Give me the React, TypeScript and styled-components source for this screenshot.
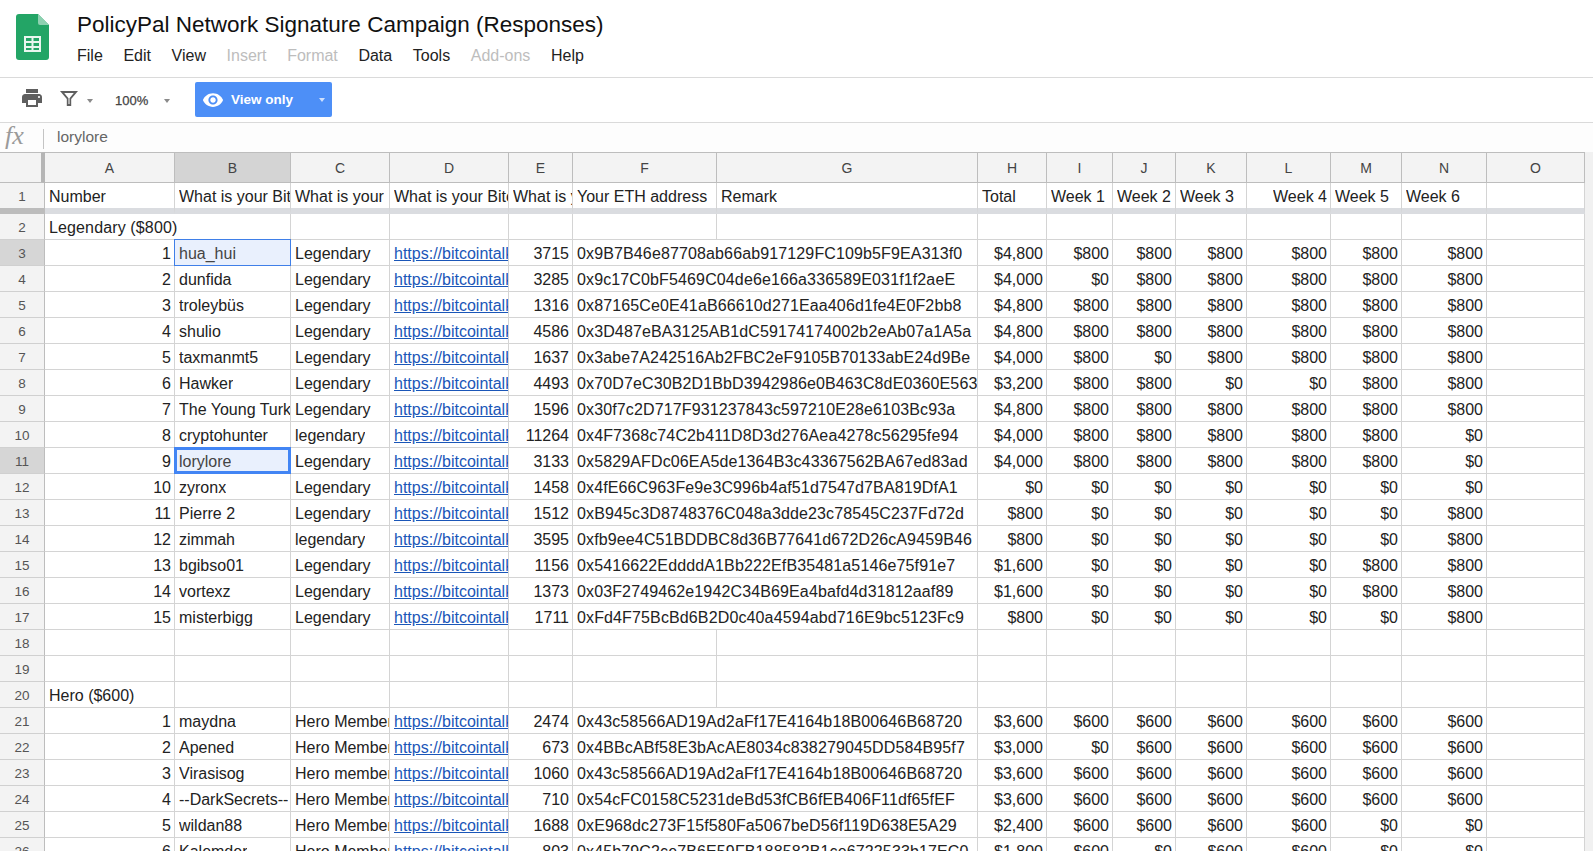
import React from "react";
import styled, { createGlobalStyle, css } from "styled-components";

const Global = createGlobalStyle`
  html, body { margin: 0; padding: 0; background: #fff; }
  body { font-family: "Liberation Sans", Arial, sans-serif; color: #222; }
`;

const Page = styled.div`
  width: 1593px;
  height: 851px;
  overflow: hidden;
  display: flex;
  flex-direction: column;
  background: #fff;
`;

const Header = styled.header`
  height: 77px;
  flex: none;
  display: flex;
  border-bottom: 1px solid #dadada;
`;

const LogoSlot = styled.div`
  width: 77px;
  flex: none;
  padding: 14px 0 0 16px;
  box-sizing: border-box;
`;

const TitleBlock = styled.div`
  display: flex;
  flex-direction: column;
  padding-top: 10px;
`;

const Title = styled.div`
  font-size: 22.5px;
  line-height: 30px;
  color: #111;
`;

const Menu = styled.nav`
  display: flex;
  gap: 20.6px;
  margin-top: 3px;
`;

const MenuItem = styled.span<{ $off?: boolean }>`
  font-size: 16px;
  line-height: 26px;
  color: ${(p) => (p.$off ? "#bdbdbd" : "#222")};
`;

const Toolbar = styled.div`
  height: 44px;
  flex: none;
  display: flex;
  align-items: flex-start;
  border-bottom: 1px solid #dadada;
  padding-left: 20px;
`;

const ToolIcon = styled.svg`
  display: block;
  flex: none;
  fill: #5f5f5f;
`;

const PrintSlot = styled.div`
  margin-top: 8px;
  width: 39px;
`;

const FilterSlot = styled.div`
  margin-top: 9px;
  width: 28px;
`;

const Caret = styled.span<{ $color?: string }>`
  display: block;
  flex: none;
  width: 0;
  height: 0;
  border-left: 3.5px solid transparent;
  border-right: 3.5px solid transparent;
  border-top: 4px solid ${(p) => p.$color ?? "#8a8a8a"};
`;

const FilterCaret = styled.div`
  margin-top: 21px;
  width: 28px;
`;

const Zoom = styled.span`
  margin-top: 15px;
  width: 49px;
  font-size: 13px;
  line-height: 16px;
  font-weight: 400;
  color: #444;
  -webkit-text-stroke: 0.25px #444;
`;

const ZoomCaret = styled.div`
  margin-top: 21px;
  width: 31px;
`;

const ViewButton = styled.div`
  margin-top: 4px;
  width: 137px;
  height: 35px;
  box-sizing: border-box;
  display: flex;
  align-items: center;
  padding: 0 7px 0 7px;
  background: #4d8ff7;
  border-radius: 2px;
  color: #fff;
  font-size: 13.5px;
  font-weight: 700;
`;

const ViewLabel = styled.span`
  margin-left: 7px;
  flex: 1;
`;

const ViewEye = styled.svg`
  display: block;
  flex: none;
  fill: #fff;
`;

const FormulaBar = styled.div`
  height: 29px;
  flex: none;
  box-sizing: border-box;
  display: flex;
  align-items: center;
  background: #fdfdfd;
  padding: 0 0 0 5px;
`;

const Fx = styled.span`
  font-family: "Liberation Serif", "Times New Roman", serif;
  font-style: italic;
  font-size: 26px;
  line-height: 26px;
  margin-bottom: 4px;
  color: #9a9a9a;
  width: 38px;
`;

const FxDivider = styled.span`
  width: 1px;
  height: 20px;
  margin-top: 3px;
  background: #c4c4c4;
`;

const FormulaText = styled.span`
  margin-left: 13px;
  margin-bottom: 2px;
  font-size: 15.5px;
  color: #666;
`;

const COLS = [130, 116, 99, 119, 64, 144, 261, 69, 66, 63, 71, 84, 71, 85, 98];

const Sheet = styled.div`
  flex: 1;
  display: grid;
  grid-template-columns: 45px ${COLS.map((c) => `${c}px`).join(" ")} 1fr;
  grid-template-rows: 31px 31px;
  grid-auto-rows: 26px;
  background: #fff;
`;

const ColHead = styled.div<{ $active?: boolean }>`
  box-sizing: border-box;
  display: flex;
  align-items: center;
  justify-content: center;
  font-size: 14px;
  color: #444;
  background: ${(p) => (p.$active ? "#d4d4d4" : "#f3f3f3")};
  border-top: 1px solid #bdbdbd;
  border-bottom: 1px solid #bdbdbd;
  border-right: 1px solid #bdbdbd;
`;

const Corner = styled.div`
  box-sizing: border-box;
  background: #f3f3f3;
  border-top: 1px solid #bdbdbd;
  border-bottom: 1px solid #bdbdbd;
  border-right: 4px solid #b5b5b5;
`;

const Gutter = styled.div`
  background: #f1f1f1;
`;

const RowHead = styled.div<{ $active?: boolean; $frozen?: boolean }>`
  box-sizing: border-box;
  display: flex;
  align-items: center;
  justify-content: center;
  padding-top: 2px;
  font-size: 13.5px;
  color: #555;
  background: ${(p) => (p.$active ? "#d6d6d6" : "#f3f3f3")};
  border-right: 1px solid #bdbdbd;
  border-bottom: ${(p) => (p.$frozen ? "6px solid #bcbcbc" : "1px solid #d0d0d0")};
`;

const Cell = styled.div<{
  $right?: boolean;
  $open?: boolean;
  $frozen?: boolean;
  $sel?: "thin" | "thick";
}>`
  position: relative;
  box-sizing: border-box;
  min-width: 0;
  display: flex;
  align-items: center;
  justify-content: ${(p) => (p.$right ? "flex-end" : "flex-start")};
  padding: 2px ${(p) => (p.$right ? "3px" : "0")} 0 4px;
  font-size: 16px;
  letter-spacing: ${(p) => (p.$open ? "0.13px" : "0")};
  color: ${(p) => (p.$sel ? "#444" : "#222")};
  white-space: nowrap;
  overflow: ${(p) => (p.$open || p.$sel ? "visible" : "hidden")};
  border-right: ${(p) => (p.$open ? "0" : "1px solid #d4d4d4")};
  border-bottom: ${(p) => (p.$frozen ? "6px solid #dadce0" : "1px solid #d4d4d4")};
  ${(p) =>
    p.$sel &&
    css`
      background: #e9f0fd;
      &::after {
        content: "";
        position: absolute;
        inset: -1px -1px -1px -1px;
        border: ${p.$sel === "thick" ? "3px" : "1px"} solid ${p.$sel === "thick" ? "#4285f4" : "#3f7fe8"};
        z-index: 2;
      }
    `}
`;

const CellLink = styled.span`
  color: #1a56b8;
  text-decoration: underline;
`;

const Clip = styled.span`
  display: block;
  overflow: hidden;
`;

const LETTERS = "ABCDEFGHIJKLMNO".split("");

type Person = [number, string, string, number, string, number, string];

const legendary: Person[] = [
  [1, "hua_hui", "Legendary", 3715, "0x9B7B46e87708ab66ab917129FC109b5F9EA313f0", 4800, "888888"],
  [2, "dunfida", "Legendary", 3285, "0x9c17C0bF5469C04de6e166a336589E031f1f2aeE", 4000, "088888"],
  [3, "troleybüs", "Legendary", 1316, "0x87165Ce0E41aB66610d271Eaa406d1fe4E0F2bb8", 4800, "888888"],
  [4, "shulio", "Legendary", 4586, "0x3D487eBA3125AB1dC59174174002b2eAb07a1A5a", 4800, "888888"],
  [5, "taxmanmt5", "Legendary", 1637, "0x3abe7A242516Ab2FBC2eF9105B70133abE24d9Be", 4000, "808888"],
  [6, "Hawker", "Legendary", 4493, "0x70D7eC30B2D1BbD3942986e0B463C8dE0360E563", 3200, "880088"],
  [7, "The Young Turk", "Legendary", 1596, "0x30f7c2D717F931237843c597210E28e6103Bc93a", 4800, "888888"],
  [8, "cryptohunter", "legendary", 11264, "0x4F7368c74C2b411D8D3d276Aea4278c56295fe94", 4000, "888880"],
  [9, "lorylore", "Legendary", 3133, "0x5829AFDc06EA5de1364B3c43367562BA67ed83ad", 4000, "888880"],
  [10, "zyronx", "Legendary", 1458, "0x4fE66C963Fe9e3C996b4af51d7547d7BA819DfA1", 0, "000000"],
  [11, "Pierre 2", "Legendary", 1512, "0xB945c3D8748376C048a3dde23c78545C237Fd72d", 800, "000008"],
  [12, "zimmah", "legendary", 3595, "0xfb9ee4C51BDDBC8d36B77641d672D26cA9459B46", 800, "000008"],
  [13, "bgibso01", "Legendary", 1156, "0x5416622EddddA1Bb222EfB35481a5146e75f91e7", 1600, "000088"],
  [14, "vortexz", "Legendary", 1373, "0x03F2749462e1942C34B69Ea4bafd4d31812aaf89", 1600, "000088"],
  [15, "misterbigg", "Legendary", 1711, "0xFd4F75BcBd6B2D0c40a4594abd716E9bc5123Fc9", 800, "000008"],
];

const hero: Person[] = [
  [1, "maydna", "Hero Member", 2474, "0x43c58566AD19Ad2aFf17E4164b18B00646B68720", 3600, "666666"],
  [2, "Apened", "Hero Member", 673, "0x4BBcABf58E3bAcAE8034c838279045DD584B95f7", 3000, "066666"],
  [3, "Virasisog", "Hero member", 1060, "0x43c58566AD19Ad2aFf17E4164b18B00646B68720", 3600, "666666"],
  [4, "--DarkSecrets--", "Hero Member", 710, "0x54cFC0158C5231deBd53fCB6fEB406F11df65fEF", 3600, "666666"],
  [5, "wildan88", "Hero Member", 1688, "0xE968dc273F15f580Fa5067beD56f119D638E5A29", 2400, "666600"],
  [6, "Kalemder", "Hero Member", 803, "0x45b79C2ce7B6E59FB188582B1ce6722533b17EC0", 1800, "606600"],
];

const money = (n: number) => "$" + n.toLocaleString("en-US");
const LINK = "https://bitcointalk.org/index.php?action=profile";

const HEAD: [string, boolean?][] = [
  ["Number"],
  ["What is your Bitcointalk username?"],
  ["What is your"],
  ["What is your Bitcointalk profile"],
  ["What is your Bitcointalk UID?"],
  ["Your ETH address"],
  ["Remark"],
  ["Total"],
  ["Week 1"],
  ["Week 2"],
  ["Week 3"],
  ["Week 4", true],
  ["Week 5"],
  ["Week 6"],
  [""],
];

const EmptyCells = ({ from, rowKey }: { from: number; rowKey: number }) => (
  <>
    {LETTERS.slice(from).map((l) => (
      <Cell key={`${rowKey}${l}`} />
    ))}
    <Gutter />
  </>
);

const PersonRow = ({ row, p }: { row: number; p: Person }) => (
  <>
    <RowHead $active={row === 3 || row === 11}>{row}</RowHead>
    <Cell $right>{p[0]}</Cell>
    <Cell $sel={row === 3 ? "thin" : row === 11 ? "thick" : undefined}>
      <Clip>{p[1]}</Clip>
    </Cell>
    <Cell>
      <Clip>{p[2]}</Clip>
    </Cell>
    <Cell>
      <Clip>
        <CellLink>{LINK}</CellLink>
      </Clip>
    </Cell>
    <Cell $right>{p[3]}</Cell>
    <Cell $open>{p[4]}</Cell>
    <Cell />
    <Cell $right>{money(p[5])}</Cell>
    {p[6].split("").map((d, i) => (
      <Cell key={i} $right>
        {"$" + (d === "0" ? "0" : d + "00")}
      </Cell>
    ))}
    <Cell />
    <Gutter />
  </>
);

const SectionRow = ({ row, label, open }: { row: number; label: string; open?: boolean }) => (
  <>
    <RowHead>{row}</RowHead>
    <Cell $open={open}>{label}</Cell>
    <EmptyCells from={1} rowKey={row} />
  </>
);

const BlankRow = ({ row }: { row: number }) => (
  <>
    <RowHead>{row}</RowHead>
    <EmptyCells from={0} rowKey={row} />
  </>
);

const SheetsLogo = () => (
  <svg width="33" height="46" viewBox="0 0 33 46" aria-hidden="true" style={{ display: "block" }}>
    <path d="M3 0H22L33 11V43a3 3 0 0 1-3 3H3a3 3 0 0 1-3-3V3a3 3 0 0 1 3-3z" fill="#23a566" />
    <path d="M22 0L33 11H24a2 2 0 0 1-2-2z" fill="#8ed1b1" />
    <path
      d="M8 22H25V38H8zM10 24V27H15.5V24zM17.5 24V27H23V24zM10 29V32H15.5V29zM17.5 29V32H23V29zM10 34V36H15.5V34zM17.5 34V36H23V34z"
      fill="#e9f6ef"
      fillRule="evenodd"
    />
  </svg>
);

export default function App() {
  return (
    <Page>
      <Global />
      <Header>
        <LogoSlot>
          <SheetsLogo />
        </LogoSlot>
        <TitleBlock>
          <Title>PolicyPal Network Signature Campaign (Responses)</Title>
          <Menu>
            <MenuItem>File</MenuItem>
            <MenuItem>Edit</MenuItem>
            <MenuItem>View</MenuItem>
            <MenuItem $off>Insert</MenuItem>
            <MenuItem $off>Format</MenuItem>
            <MenuItem>Data</MenuItem>
            <MenuItem>Tools</MenuItem>
            <MenuItem $off>Add-ons</MenuItem>
            <MenuItem>Help</MenuItem>
          </Menu>
        </TitleBlock>
      </Header>
      <Toolbar>
        <PrintSlot>
          <ToolIcon width="24" height="24" viewBox="0 0 24 24">
            <path d="M19 8H5c-1.66 0-3 1.34-3 3v6h4v4h12v-4h4v-6c0-1.66-1.34-3-3-3zm-3 11H8v-5h8v5zm3-7c-.55 0-1-.45-1-1s.45-1 1-1 1 .45 1 1-.45 1-1 1zm-1-9H6v4h12V3z" />
          </ToolIcon>
        </PrintSlot>
        <FilterSlot>
          <ToolIcon width="22" height="22" viewBox="0 0 22 22">
            <path
              d="M1 4H19L12.2 12V19H7.8V12ZM5.2 6H14.8L10.5 11.2V17H9.5V11.2Z"
              fillRule="evenodd"
            />
          </ToolIcon>
        </FilterSlot>
        <FilterCaret>
          <Caret />
        </FilterCaret>
        <Zoom>100%</Zoom>
        <ZoomCaret>
          <Caret />
        </ZoomCaret>
        <ViewButton>
          <ViewEye width="22" height="22" viewBox="0 0 24 24">
            <path d="M12 4.5C7 4.5 2.73 7.61 1 12c1.73 4.39 6 7.5 11 7.5s9.27-3.11 11-7.5c-1.73-4.39-6-7.5-11-7.5zM12 17c-2.76 0-5-2.24-5-5s2.24-5 5-5 5 2.24 5 5-2.24 5-5 5zm0-8c-1.66 0-3 1.34-3 3s1.34 3 3 3 3-1.34 3-3-1.34-3-3-3z" />
          </ViewEye>
          <ViewLabel>View only</ViewLabel>
          <Caret $color="#cfe0fc" />
        </ViewButton>
      </Toolbar>
      <FormulaBar>
        <Fx>fx</Fx>
        <FxDivider />
        <FormulaText>lorylore</FormulaText>
      </FormulaBar>
      <Sheet>
        <Corner />
        {LETTERS.map((l) => (
          <ColHead key={l} $active={l === "B"}>
            {l}
          </ColHead>
        ))}
        <Gutter />

        <RowHead $frozen>1</RowHead>
        {HEAD.map(([text, right], i) => (
          <Cell key={i} $frozen $right={right}>
            <Clip>{text}</Clip>
          </Cell>
        ))}
        <Gutter />

        <SectionRow row={2} label="Legendary ($800)" open />
        {legendary.map((p, i) => (
          <PersonRow key={p[1]} row={i + 3} p={p} />
        ))}
        <BlankRow row={18} />
        <BlankRow row={19} />
        <SectionRow row={20} label="Hero ($600)" />
        {hero.map((p, i) => (
          <PersonRow key={p[1]} row={i + 21} p={p} />
        ))}
      </Sheet>
    </Page>
  );
}
